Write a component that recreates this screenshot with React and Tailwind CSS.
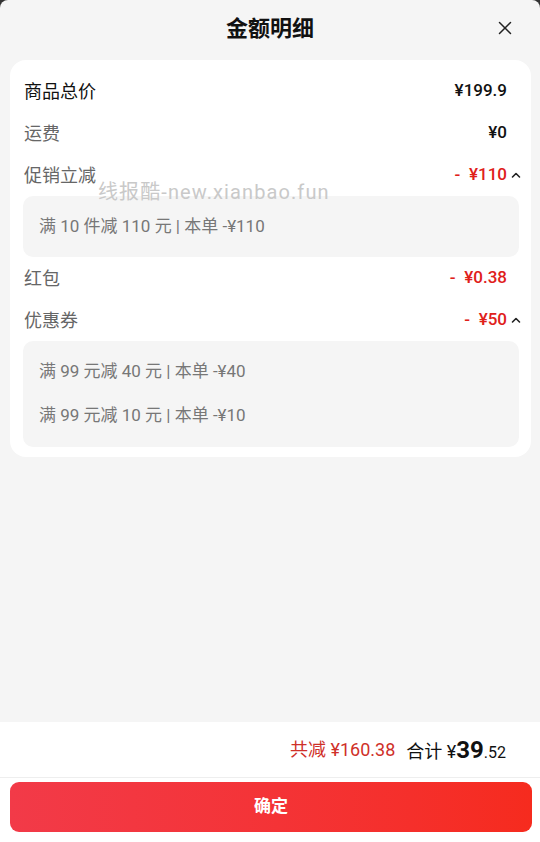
import { X } from 'lucide-react';

const font = { fontFamily: 'Roboto, "Noto Sans CJK SC", sans-serif' };

function Arrow() {
  return (
    <svg viewBox="0 0 12 12" className="w-3 h-3 -mr-[15px] ml-[3px]" fill="none" stroke="#222" strokeWidth="1.6" strokeLinecap="round" strokeLinejoin="round">
      <path d="M2.5 8 L6 4.5 L9.5 8" />
    </svg>
  );
}

function Row({ label, value, dark, red, open }) {
  return (
    <div className="h-[42px] flex items-center justify-between pl-[1px] pr-[12px]">
      <span className={`text-[18px] ${dark ? 'text-[#111]' : 'text-[#666]'}`}>{label}</span>
      <span className={`flex items-center text-[17px] font-medium ${red ? 'text-[#e0201a]' : 'text-[#111]'}`}>
        {value}
        {open && <Arrow />}
      </span>
    </div>
  );
}

export default function App() {
  return (
    <div className="bg-[#333] w-[540px] h-[842px]" style={font}>
      <div className="relative flex flex-col h-full bg-[#f5f5f5] rounded-t-[8px] overflow-hidden">
        {/* Header */}
        <div className="relative h-[56px] flex items-center justify-center">
          <h1 className="text-[22px] font-bold text-[#111]">金额明细</h1>
          <X className="absolute right-[24px] top-[17px] w-[22px] h-[22px] text-[#222]" strokeWidth={1.6} />
        </div>

        {/* Detail card */}
        <div className="flex-1">
          <div className="ml-[10px] mr-[9px] mt-[4px] bg-white rounded-[16px] pl-[13px] pr-[12px] pt-[10px] pb-[10px]">
            <Row label="商品总价" value="¥199.9" dark />
            <Row label="运费" value="¥0" />
            <Row label="促销立减" value={'-\u2002¥110'} red open />
            <div className="bg-[#f5f5f5] rounded-[10px] h-[61px] flex items-center px-[16px] text-[17px] text-[#777]">
              满 10 件减 110 元 | 本单 -¥110
            </div>
            <Row label="红包" value={'-\u2002¥0.38'} red />
            <Row label="优惠券" value={'-\u2002¥50'} red open />
            <div className="bg-[#f5f5f5] rounded-[10px] py-[9px] px-[16px] text-[17px] text-[#777]">
              <div className="h-[44px] flex items-center">满 99 元减 40 元 | 本单 -¥40</div>
              <div className="h-[44px] flex items-center">满 99 元减 10 元 | 本单 -¥10</div>
            </div>
          </div>
        </div>

        {/* Footer */}
        <div className="bg-white">
          <div className="h-[56px] flex items-center justify-end pr-[34px] border-b border-[#eee]">
            <span className="text-[18px] text-[#cf3029] mr-[11px]">共减 ¥160.38</span>
            <span className="text-[18px] text-[#111] flex items-baseline">
              合计 ¥<span className="text-[24px] font-bold">39</span><span className="text-[16px]">.52</span>
            </span>
          </div>
          <div className="pl-[10px] pr-[8px] pt-[4px] pb-[10px]">
            <button className="w-full h-[50px] rounded-[9px] bg-gradient-to-r from-[#f23a48] to-[#f62b1e] text-white text-[17px] font-bold">
              确定
            </button>
          </div>
        </div>

        {/* Watermark */}
        <div className="absolute left-[98px] top-[177px] text-[20px] text-[#c9c9c9] tracking-[1.1px] pointer-events-none">
          线报酷-new.xianbao.fun
        </div>
      </div>
    </div>
  );
}
